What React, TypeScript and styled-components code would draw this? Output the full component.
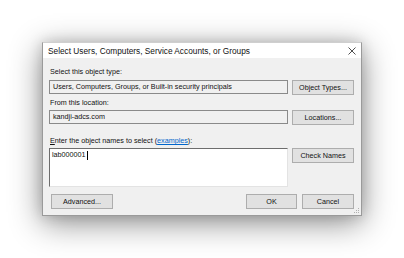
import React from "react";
import styled, { createGlobalStyle } from "styled-components";

const Global = createGlobalStyle`
  html, body { margin: 0; padding: 0; background: #ffffff; }
  body { width: 404px; height: 258px; overflow: hidden; font-family: "Liberation Sans", Arial, sans-serif; }
`;

const Stage = styled.div`
  width: 404px;
  height: 258px;
  padding: 42px 0 0 42px;
  box-sizing: border-box;
`;

const Dialog = styled.div`
  width: 320px;
  height: 174px;
  box-sizing: border-box;
  background: #f0f0f0;
  border: 1px solid #9a9a9a;
  border-top-color: #cfcfcf;
  box-shadow: 0 7px 30px rgba(0, 0, 0, 0.45), 0 0 12px rgba(0, 0, 0, 0.15);
  display: flex;
  flex-direction: column;
  position: relative;
`;

const TitleBar = styled.div`
  height: 18px;
  background: #ffffff;
  display: flex;
  align-items: center;
  justify-content: space-between;
  padding: 0 5px 0 5px;
  font-size: 8.3px;
  color: #111;
`;

const Close = styled.svg`
  width: 8px;
  height: 8px;
  margin-top: 1px;
`;

const Content = styled.div`
  flex: 1;
  display: flex;
  flex-direction: column;
  padding: 9px 7px 6px 6px;
  font-size: 7.2px;
  color: #111;
`;

const Label = styled.div<{ $mt?: number; $mb?: number }>`
  height: 10px;
  line-height: 10px;
  margin-top: ${(p) => p.$mt ?? 0}px;
  margin-bottom: ${(p) => p.$mb ?? 2}px;
  padding-left: 1px;
`;

const Row = styled.div`
  display: grid;
  grid-template-columns: 239px 62px;
  column-gap: 4px;
  align-items: start;
`;

const Field = styled.div`
  height: 14px;
  box-sizing: border-box;
  border: 1px solid #8a8a8a;
  background: #f0f0f0;
  line-height: 12px;
  padding-left: 3px;
  white-space: nowrap;
`;

const Area = styled.div`
  height: 39px;
  box-sizing: border-box;
  background: #ffffff;
  border: 1px solid #e3e3e3;
  border-top: 1px solid #6d6d6d;
  border-left: 1px solid #6d6d6d;
  padding: 1px 2px;
  line-height: 10px;
  display: flex;
  align-items: flex-start;
`;

const Caret = styled.span`
  display: inline-block;
  width: 1px;
  height: 9px;
  background: #000;
  margin-left: 1px;
  margin-top: 1px;
`;

const Button = styled.div<{ $w?: number }>`
  height: 15px;
  width: ${(p) => (p.$w ? `${p.$w}px` : "auto")};
  box-sizing: border-box;
  background: #e1e1e1;
  border: 1px solid #adadad;
  display: flex;
  align-items: center;
  justify-content: center;
  font-size: 7.2px;
  color: #111;
  white-space: nowrap;
`;

const Footer = styled.div`
  margin-top: 7px;
  display: flex;
  align-items: center;
  padding-left: 2px;
  gap: 5px;
`;

const Spacer = styled.div`
  flex: 1;
`;

const Link = styled.span`
  color: #0066cc;
  text-decoration: underline;
`;

const Key = styled.span`
  text-decoration: underline;
`;

const Grip = styled.svg`
  position: absolute;
  right: 1px;
  bottom: 1px;
  width: 6px;
  height: 6px;
`;

export default function App() {
  return (
    <>
      <Global />
      <Stage>
        <Dialog>
          <TitleBar>
            <span>Select Users, Computers, Service Accounts, or Groups</span>
            <Close viewBox="0 0 8 8">
              <path d="M0.5 0.5 L7.5 7.5 M7.5 0.5 L0.5 7.5" stroke="#222" strokeWidth="0.8" />
            </Close>
          </TitleBar>
          <Content>
            <Label $mb={3}>Select this object type:</Label>
            <Row>
              <Field>Users, Computers, Groups, or Built-in security principals</Field>
              <Button>Object Types...</Button>
            </Row>
            <Label $mt={3} $mb={2}>From this location:</Label>
            <Row>
              <Field>kandji-adcs.com</Field>
              <Button>Locations...</Button>
            </Row>
            <Label $mt={11} $mb={2}>
              <Key>E</Key>nter the object names to select (<Link>examples</Link>):
            </Label>
            <Row>
              <Area>
                lab000001
                <Caret />
              </Area>
              <Button>Check Names</Button>
            </Row>
            <Footer>
              <Button $w={62}>Advanced...</Button>
              <Spacer />
              <Button $w={51}>OK</Button>
              <Button $w={52}>Cancel</Button>
            </Footer>
          </Content>
          <Grip viewBox="0 0 6 6">
            <rect x="4" y="4" width="1" height="1" fill="#b0b0b0" />
            <rect x="2" y="4" width="1" height="1" fill="#b0b0b0" />
            <rect x="4" y="2" width="1" height="1" fill="#b0b0b0" />
            <rect x="0" y="4" width="1" height="1" fill="#b0b0b0" />
            <rect x="2" y="2" width="1" height="1" fill="#b0b0b0" />
            <rect x="4" y="0" width="1" height="1" fill="#b0b0b0" />
          </Grip>
        </Dialog>
      </Stage>
    </>
  );
}
